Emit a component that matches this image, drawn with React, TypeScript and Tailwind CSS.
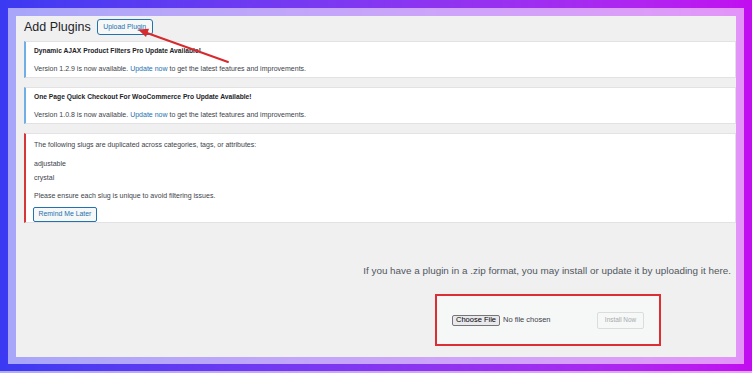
import React from 'react';

const font = { fontFamily: '"Liberation Sans", Arial, sans-serif' };

const UpdateNotice = ({ title, version }: { title: string; version: string }) => (
  <div className="bg-white border border-[#e2e2e4] border-l-2 border-l-[#72aee6] h-[37px] pl-[8px] pt-[4px] flex flex-col gap-[8px]">
    <p className="text-[6.7px] leading-[10px] font-semibold text-[#1d2327]">{title}</p>
    <p className="text-[7px] leading-[10px] text-[#3c434a]">
      Version {version} is now available. <span className="text-[#2271b1]">Update now</span> to get the latest
      features and improvements.
    </p>
  </div>
);

const App = () => {
  return (
    <div className="relative w-[752px] h-[373px] overflow-hidden" style={font}>
      {/* gradient frame */}
      <div className="h-[371px] bg-gradient-to-r from-[#3a3af2] to-[#c20cf0] p-2">
        <div className="h-[356px] bg-white/55 p-2">
          <div className="h-[341px] bg-[#f0f0f1] pl-2 flex flex-col">
            {/* heading */}
            <div className="flex items-center gap-[6px] pt-[3px] h-[19px]">
              <h1 className="text-[12.5px] leading-[16px] text-[#1d2327]">Add Plugins</h1>
              <button className="h-[16px] w-[56px] border border-[#2271b1] rounded-[3px] bg-[#f6f7f7] text-[#2271b1] text-[6.9px] leading-none">
                Upload Plugin
              </button>
            </div>

            <div className="mt-[6px] flex flex-col gap-[9px]">
              <UpdateNotice title="Dynamic AJAX Product Filters Pro Update Available!" version="1.2.9" />
              <UpdateNotice title="One Page Quick Checkout For WooCommerce Pro Update Available!" version="1.0.8" />

              {/* duplicate slugs notice */}
              <div className="bg-white border border-[#e2e2e4] border-l-2 border-l-[#d63638] h-[90px] pl-[8px] pt-[6px] text-[7px] leading-[10px] text-[#3c434a]">
                <p>The following slugs are duplicated across categories, tags, or attributes:</p>
                <p className="mt-[9px]">adjustable</p>
                <p className="mt-[4px]">crystal</p>
                <p className="mt-[8px]">Please ensure each slug is unique to avoid filtering issues.</p>
                <button className="mt-[6px] -ml-[1px] h-[15px] w-[64px] border border-[#2271b1] rounded-[2px] bg-[#f6f7f7] text-[#2271b1] text-[6.9px] leading-none">
                  Remind Me Later
                </button>
              </div>
            </div>

            {/* upload area */}
            <p className="mt-[43px] pr-[5px] text-right text-[9.9px] leading-[10px] text-[#50575e]">
              If you have a plugin in a .zip format, you may install or update it by uploading it here.
            </p>
            <div className="mt-[18px] self-end mr-[75px] w-[226px] h-[52px] border-2 border-[#dc2f34] bg-[#f6f7f7] flex items-center justify-between pl-[15px] pr-[15px]">
              <div className="flex items-center gap-[3px]">
                <button className="h-[11px] w-[48px] border border-[#767676] rounded-[2px] bg-[#e9e9ed] text-[7.5px] leading-none text-black">
                  Choose File
                </button>
                <span className="text-[7.5px] text-[#3c434a]">No file chosen</span>
              </div>
              <button className="h-[17px] w-[47px] border border-[#dcdcde] rounded-[2px] bg-[#f6f7f7] text-[6.4px] leading-none text-[#a7aaad]">
                Install Now
              </button>
            </div>
          </div>
        </div>
      </div>
      <div className="h-[2px] bg-gradient-to-r from-[#b2acf7] to-[#e6a6f7]" />

      {/* annotation arrow */}
      <svg className="absolute inset-0 pointer-events-none" width="752" height="373" viewBox="0 0 752 373">
        <line x1="228" y1="62" x2="147" y2="33" stroke="#d62a2e" strokeWidth="2" strokeLinecap="round" />
        <polygon points="138,29.5 149,28.8 146,37" fill="#d62a2e" />
      </svg>
    </div>
  );
};

export default App;
